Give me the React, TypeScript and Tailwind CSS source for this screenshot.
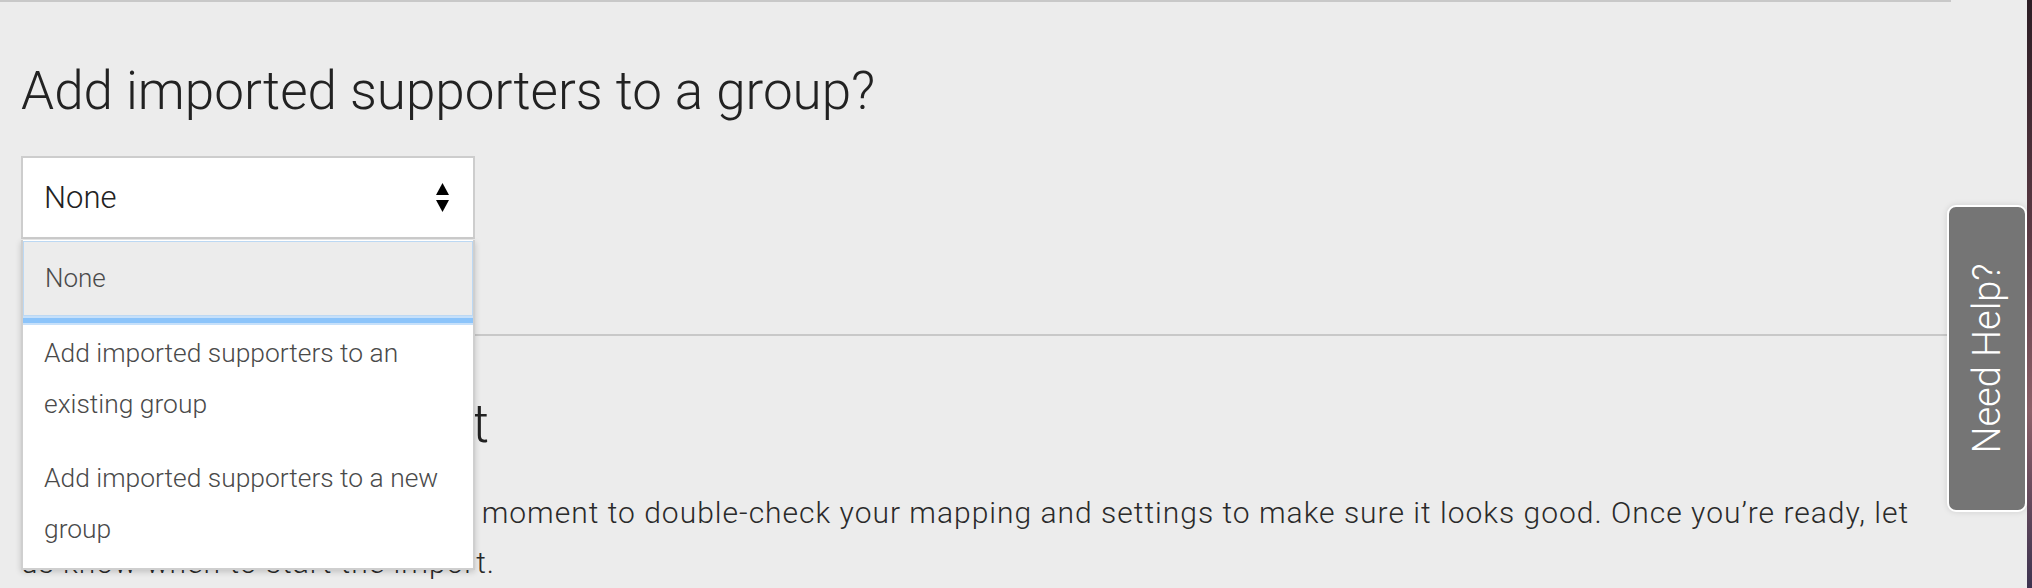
import React from 'react';

const options = [
  'Add imported supporters to an existing group',
  'Add imported supporters to a new group',
];

function SortArrows() {
  return (
    <svg width="13" height="29" viewBox="0 0 13 29" className="shrink-0">
      <polygon points="6.5,0 13,12 0,12" fill="#000" />
      <polygon points="0,17 13,17 6.5,29" fill="#000" />
    </svg>
  );
}

export default function App() {
  return (
    <div className="relative h-[588px] w-full overflow-hidden bg-[#ececec] font-['Roboto',sans-serif] text-[#222]">
      <div className="w-[1951px] pl-[21px]">
        <div className="h-[2px] -ml-[21px] bg-[#c8c8c8]" />

        <h2 className="mt-[59px] text-[53px] font-light leading-[60px] text-[#222]">
          Add imported supporters to a group?
        </h2>

        <div className="mt-[35px] flex h-[83px] w-[454px] items-center justify-between border-2 border-[#cdcdcd] bg-white pl-[21px] pr-[24px]">
          <span className="text-[31px] font-light leading-none text-[#222]">None</span>
          <SortArrows />
        </div>

        <div className="mt-[95px] h-[2px] bg-[#c8c8c8]" />

        <h2 className="mt-[58px] text-[53px] font-light leading-[60px] text-[#222]">
          Confirm your import
        </h2>
        <p className="mt-[34px] pr-[24px] text-[30px] font-light leading-[50px] tracking-[1px] text-[#2a2a2a]">
          Before you import, please take a moment to double-check your mapping and settings to make sure it looks good. Once you’re ready, let us know when to start the import.
        </p>
      </div>

      {/* open dropdown list */}
      <div className="absolute left-[21px] top-[240px] w-[454px] border-x-2 border-b-2 border-[#cfcfcf] bg-white shadow-[0_2px_6px_rgba(0,0,0,0.18)]">
        <div className="mt-[1px] flex h-[75px] items-center border border-[#bcd8f3] bg-[#ececec] pl-[21px]">
          <span className="text-[26px] font-light text-[#4a4a4a]">None</span>
        </div>
        <div className="h-[9px] border-y-[2px] border-[#c6e0fa] bg-[#8cc4fa]" />
        <div className="pl-[21px] pr-[30px] pt-[3px] pb-[11px] text-[26.4px] font-light leading-[51px] text-[#4a4a4a]">
          {options[0]}
        </div>
        <div className="pl-[21px] pr-[30px] pt-[12px] pb-[13px] text-[26.4px] font-light leading-[51px] text-[#4a4a4a]">
          {options[1]}
        </div>
      </div>

      {/* help tab */}
      <div className="absolute left-[1947px] top-[205px] flex h-[307px] w-[80px] items-center justify-center rounded-[9px] border-2 border-white bg-[#757575] shadow-[0_0_6px_rgba(0,0,0,0.12)]">
        <span className="-rotate-90 whitespace-nowrap text-[38px] font-light text-white">Need Help?</span>
      </div>

      <div className="absolute right-0 top-0 h-full w-[5px] bg-[linear-gradient(180deg,#2b1d24_0%,#5a3a44_40%,#8a6068_70%,#3d3350_100%)]" />
    </div>
  );
}
